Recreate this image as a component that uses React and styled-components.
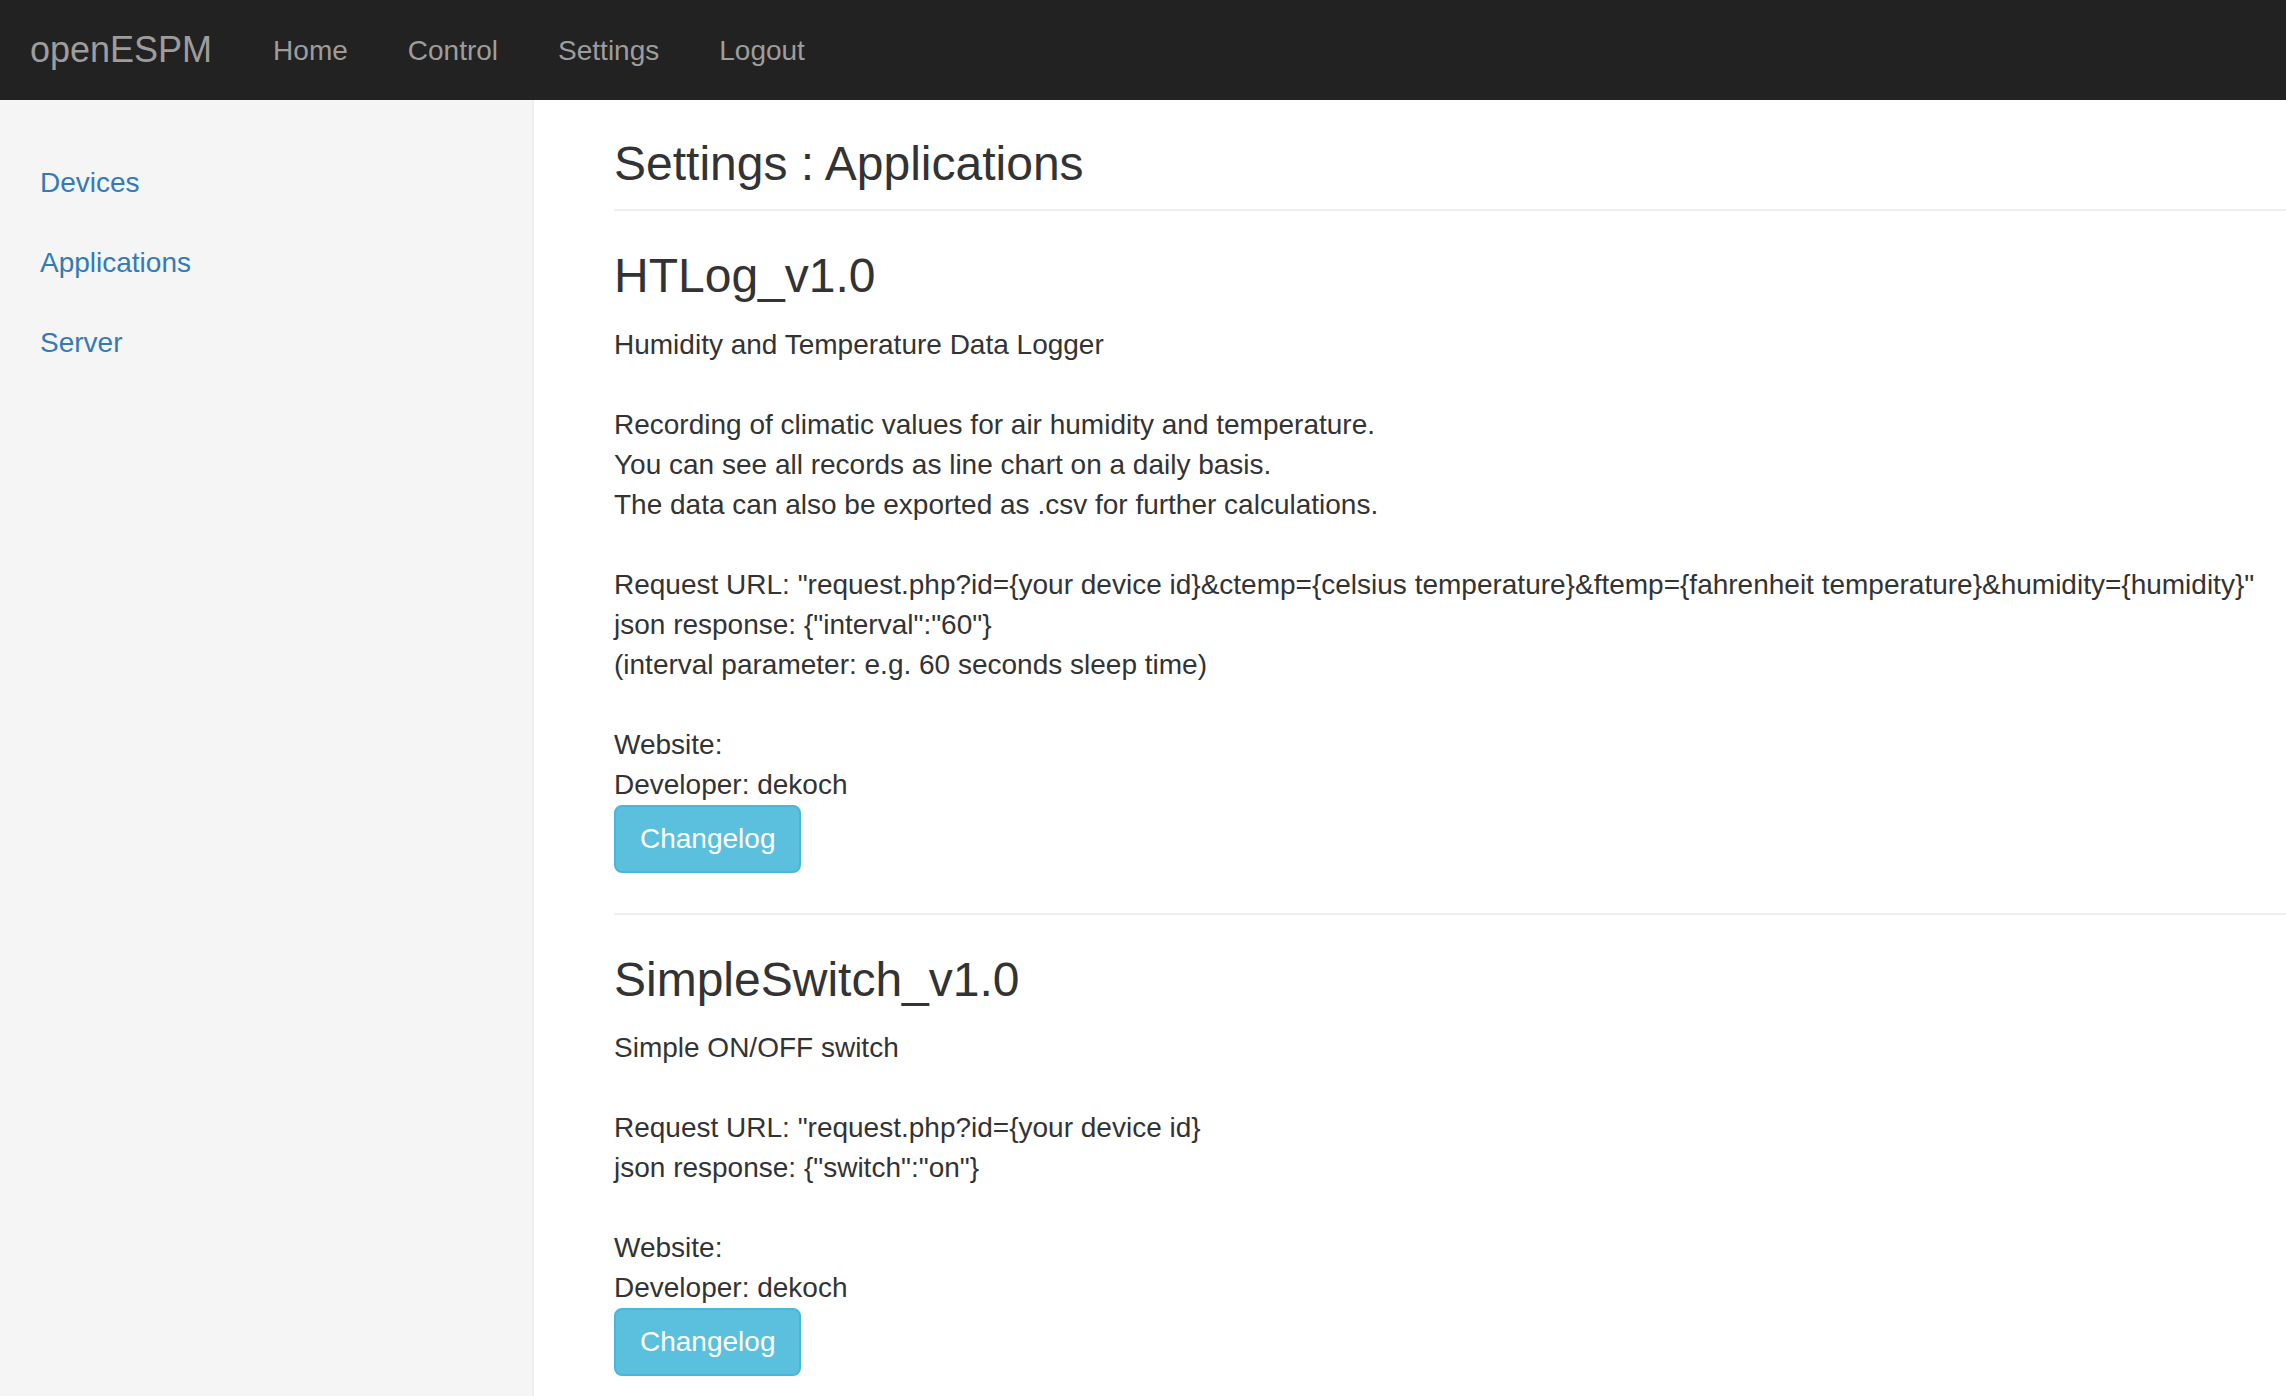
import React from "react";
import styled, { createGlobalStyle } from "styled-components";

const GlobalStyle = createGlobalStyle`
  html, body {
    margin: 0;
    padding: 0;
    background: #fff;
  }
  body {
    font-family: "Liberation Sans", Arial, Helvetica, sans-serif;
    font-size: 28px;
    line-height: 40px;
    color: #333;
  }
  * { box-sizing: border-box; }
`;

const Page = styled.div`
  display: flex;
  flex-direction: column;
  min-height: 100vh;
`;

const Navbar = styled.nav`
  display: flex;
  align-items: stretch;
  height: 100px;
  background: #222;
  flex-shrink: 0;
`;

const Brand = styled.a`
  padding: 30px 30px;
  font-size: 36px;
  line-height: 40px;
  color: #9d9d9d;
  text-decoration: none;
`;

const NavList = styled.ul`
  display: flex;
  list-style: none;
  margin: 0;
  padding: 0 0 0 1px;
`;

const NavLink = styled.a`
  display: block;
  padding: 31px 30px 29px;
  line-height: 40px;
  color: #9d9d9d;
  text-decoration: none;
`;

const Body = styled.div`
  display: flex;
  flex: 1;
`;

const Sidebar = styled.aside`
  width: 534px;
  flex-shrink: 0;
  background: #f5f5f5;
  border-right: 2px solid #eee;
  padding-top: 43px;
`;

const SideList = styled.ul`
  list-style: none;
  margin: 0;
  padding: 0;
`;

const SideLink = styled.a`
  display: block;
  padding: 20px 40px;
  line-height: 40px;
  color: #337ab7;
  text-decoration: none;
`;

const Main = styled.main`
  flex: 1;
  min-width: 0;
  padding: 38px 0 0 80px;
`;

const PageHeader = styled.h1`
  margin: 0;
  padding-bottom: 18px;
  border-bottom: 2px solid #eee;
  font-size: 48px;
  font-weight: 500;
  line-height: 1.1;
  color: #333;
`;

const AppTitle = styled.h3`
  margin: 39px 0 22px;
  font-size: 48px;
  font-weight: 500;
  line-height: 1.1;
  color: #333;
`;

const Description = styled.p`
  margin: 0;
  white-space: nowrap;
`;

const InfoButton = styled.button`
  display: inline-block;
  padding: 12px 24px;
  font-family: inherit;
  font-size: 28px;
  line-height: 40px;
  color: #fff;
  background: #5bc0de;
  border: 2px solid #46b8da;
  border-radius: 8px;
  cursor: pointer;
`;

const Divider = styled.hr`
  margin: 40px 0 0;
  border: 0;
  border-top: 2px solid #eee;
`;

const apps = [
  {
    name: "HTLog_v1.0",
    lines: [
      "Humidity and Temperature Data Logger",
      "",
      "Recording of climatic values for air humidity and temperature.",
      "You can see all records as line chart on a daily basis.",
      "The data can also be exported as .csv for further calculations.",
      "",
      'Request URL: "request.php?id={your device id}&ctemp={celsius temperature}&ftemp={fahrenheit temperature}&humidity={humidity}"',
      'json response: {"interval":"60"}',
      "(interval parameter: e.g. 60 seconds sleep time)",
      "",
      "Website:",
      "Developer: dekoch",
    ],
  },
  {
    name: "SimpleSwitch_v1.0",
    lines: [
      "Simple ON/OFF switch",
      "",
      'Request URL: "request.php?id={your device id}',
      'json response: {"switch":"on"}',
      "",
      "Website:",
      "Developer: dekoch",
    ],
  },
];

const App = () => (
  <>
    <GlobalStyle />
    <Page>
      <Navbar>
        <Brand href="#">openESPM</Brand>
        <NavList>
          {["Home", "Control", "Settings", "Logout"].map((l) => (
            <li key={l}>
              <NavLink href="#">{l}</NavLink>
            </li>
          ))}
        </NavList>
      </Navbar>
      <Body>
        <Sidebar>
          <SideList>
            {["Devices", "Applications", "Server"].map((l) => (
              <li key={l}>
                <SideLink href="#">{l}</SideLink>
              </li>
            ))}
          </SideList>
        </Sidebar>
        <Main>
          <PageHeader>Settings : Applications</PageHeader>
          {apps.map((app, i) => (
            <section key={app.name}>
              <AppTitle>{app.name}</AppTitle>
              <Description>
                {app.lines.map((line, j) => (
                  <React.Fragment key={j}>
                    {line}
                    <br />
                  </React.Fragment>
                ))}
              </Description>
              <InfoButton type="button">Changelog</InfoButton>
              {i < apps.length - 1 && <Divider />}
            </section>
          ))}
        </Main>
      </Body>
    </Page>
  </>
);

export default App;
